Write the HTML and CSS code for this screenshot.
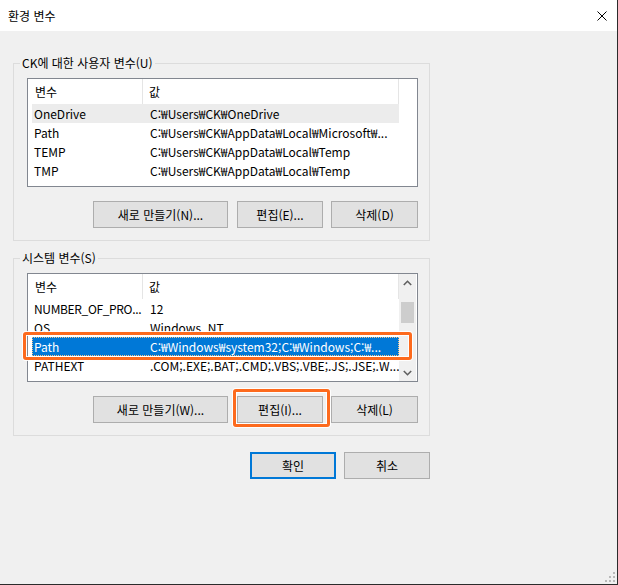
FILE: index.html
```html
<!DOCTYPE html>
<html lang="ko">
<head>
<meta charset="utf-8">
<title>환경 변수</title>
<link rel="stylesheet" href="styles.css">
</head>
<body>
<div class="window">
  <div class="titlebar">
    <span class="title">환경 변수</span>
    <span class="close">
      <svg width="10" height="10" viewBox="0 0 10 10"><path d="M0.5 0.5 L9.5 9.5 M9.5 0.5 L0.5 9.5" stroke="#000" stroke-width="1" fill="none"/></svg>
    </span>
  </div>
  <div class="body">
    <fieldset class="group">
      <legend>CK에 대한 사용자 변수(U)</legend>
      <div class="group-inner">
        <div class="list">
          <div class="table">
            <div class="head"><div class="c1">변수</div><div class="c2">값</div></div>
            <div class="row hover"><div class="c1">OneDrive</div><div class="c2">C:₩Users₩CK₩OneDrive</div></div>
            <div class="row"><div class="c1">Path</div><div class="c2">C:₩Users₩CK₩AppData₩Local₩Microsoft₩...</div></div>
            <div class="row"><div class="c1">TEMP</div><div class="c2">C:₩Users₩CK₩AppData₩Local₩Temp</div></div>
            <div class="row"><div class="c1">TMP</div><div class="c2">C:₩Users₩CK₩AppData₩Local₩Temp</div></div>
          </div>
        </div>
        <div class="btns">
          <button class="btn wide">새로 만들기(N)...</button>
          <button class="btn">편집(E)...</button>
          <button class="btn del">삭제(D)</button>
        </div>
      </div>
    </fieldset>

    <fieldset class="group second">
      <legend>시스템 변수(S)</legend>
      <div class="group-inner">
        <div class="list">
          <div class="table">
            <div class="head"><div class="c1">변수</div><div class="c2">값</div></div>
            <div class="row"><div class="c1 tight">NUMBER_OF_PRO...</div><div class="c2">12</div></div>
            <div class="row"><div class="c1">OS</div><div class="c2">Windows_NT</div></div>
            <div class="row selected marked-row"><div class="c1">Path</div><div class="c2">C:₩Windows₩system32;C:₩Windows;C:₩...</div></div>
            <div class="row"><div class="c1">PATHEXT</div><div class="c2">.COM;.EXE;.BAT;.CMD;.VBS;.VBE;.JS;.JSE;.W...</div></div>
          </div>
          <div class="scroll">
            <div class="arrow"><svg width="9" height="6" viewBox="0 0 9 6"><polyline points="0.8,5 4.5,1.3 8.2,5" fill="none" stroke="#606060" stroke-width="1.6"/></svg></div>
            <div class="track"><div class="thumb"></div></div>
            <div class="arrow"><svg width="9" height="6" viewBox="0 0 9 6"><polyline points="0.8,1 4.5,4.7 8.2,1" fill="none" stroke="#606060" stroke-width="1.6"/></svg></div>
          </div>
        </div>
        <div class="btns">
          <button class="btn wide">새로 만들기(W)...</button>
          <button class="btn marked-btn">편집(I)...</button>
          <button class="btn del">삭제(L)</button>
        </div>
      </div>
    </fieldset>

    <div class="dialog-btns">
      <button class="btn ok">확인</button>
      <button class="btn">취소</button>
    </div>
  </div>
  <div class="grip">
    <svg width="12" height="12" viewBox="0 0 12 12" fill="#b9b9b9">
      <rect x="9" y="1" width="2" height="2"/>
      <rect x="5" y="5" width="2" height="2"/><rect x="9" y="5" width="2" height="2"/>
      <rect x="1" y="9" width="2" height="2"/><rect x="5" y="9" width="2" height="2"/><rect x="9" y="9" width="2" height="2"/>
    </svg>
  </div>
</div>
</body>
</html>
```

FILE: styles.css
```css
* { box-sizing: border-box; }
html, body { margin: 0; padding: 0; }
body {
  width: 618px;
  height: 585px;
  overflow: hidden;
  background: #f0f0f0;
  font-family: "Noto Sans CJK KR", "Noto Sans", sans-serif;
  font-size: 12px;
  color: #000;
}
.window {
  width: 618px;
  height: 585px;
  display: flex;
  flex-direction: column;
  background: #f0f0f0;
  border-right: 1px solid #2b2b2b;
  border-bottom: 1px solid #2b2b2b;
}
.titlebar {
  flex: none;
  height: 31px;
  background: #fff;
  display: flex;
  align-items: center;
  justify-content: space-between;
  padding: 0 10px 0 8px;
}
.title { font-size: 12px; line-height: 16px; }
.close { display: flex; width: 10px; height: 10px; }
.body {
  flex: 1;
  padding: 24px 0 0 13px;
}
.group {
  margin: 0;
  padding: 0;
  width: 417px;
  border: 1px solid #dcdcdc;
  min-width: 0;
}
.group.second { margin-top: 9px; }
.group legend {
  margin-left: 6px;
  padding: 0 2px;
  line-height: 16px;
  height: 16px;
}
.group-inner { padding: 7px 11px 12px 13px; }
.list {
  height: 109px;
  border: 1px solid #828790;
  background: #fff;
  display: flex;
}
.table { width: 371px; display: flex; flex-direction: column; }
.head {
  height: 25px;
  display: flex;
  align-items: stretch;
  line-height: 16px;
}
.head .c1 {
  width: 115px;
  padding-left: 7px;
  border-right: 1px solid #e5e5e5;
  display: flex; align-items: center;
}
.head .c2 {
  width: 256px;
  padding-left: 6px;
  border-right: 1px solid #e5e5e5;
  display: flex; align-items: center;
}
.row {
  height: 19px;
  margin-left: 4px;
  display: flex;
  align-items: center;
  line-height: 16px;
  white-space: nowrap;
}
.row .c1 { width: 111px; flex: none; padding-left: 2px; overflow: hidden; }
.row .c1.tight { letter-spacing: -0.35px; }
.row .c2 { flex: 1; padding-left: 7px; overflow: hidden; }
.row.hover { background: #ececec; }
.row.selected {
  background: #0078d7;
  color: #fff;
  outline: 1px dotted #f3c58a;
  outline-offset: -1px;
}
.marked-row, .marked-btn { position: relative; }
.marked-row::after, .marked-btn::after {
  content: "";
  position: absolute;
  border: 3px solid #fd6a1d;
  border-radius: 3px;
  box-shadow: 0 0 0 1px rgba(255,255,255,0.9), inset 0 0 0 1px rgba(255,255,255,0.9);
  z-index: 2;
  pointer-events: none;
}
.marked-row::after { left: -9px; right: -13px; top: -5px; bottom: -4px; }
.marked-btn::after { left: -5px; right: -8px; top: -8px; bottom: -5px; }
.scroll {
  width: 17px;
  background: #f0f0f0;
  display: flex;
  flex-direction: column;
}
.arrow {
  height: 17px;
  display: flex;
  align-items: center;
  justify-content: center;
}
.track { flex: 1; padding: 11px 2px 0 2px; }
.thumb { height: 21px; background: #cdcdcd; }
.btns {
  margin-top: 14px;
  display: flex;
  justify-content: flex-end;
}
.btn {
  height: 27px;
  width: 86px;
  padding: 0;
  margin: 0;
  border: 1px solid #adadad;
  background: #e1e1e1;
  font-family: inherit;
  font-size: 12px;
  line-height: 16px;
  color: #000;
}
.btn.wide { width: 135px; margin-right: 9px; }
.btn.del { width: 87px; margin-left: 8px; }
.dialog-btns {
  width: 417px;
  margin-top: 16px;
  display: flex;
  justify-content: flex-end;
  gap: 8px;
}
.btn.ok { border: 2px solid #0078d7; }
.grip {
  align-self: flex-end;
  display: flex;
  margin: 0 1px 1px 0;
}
```
